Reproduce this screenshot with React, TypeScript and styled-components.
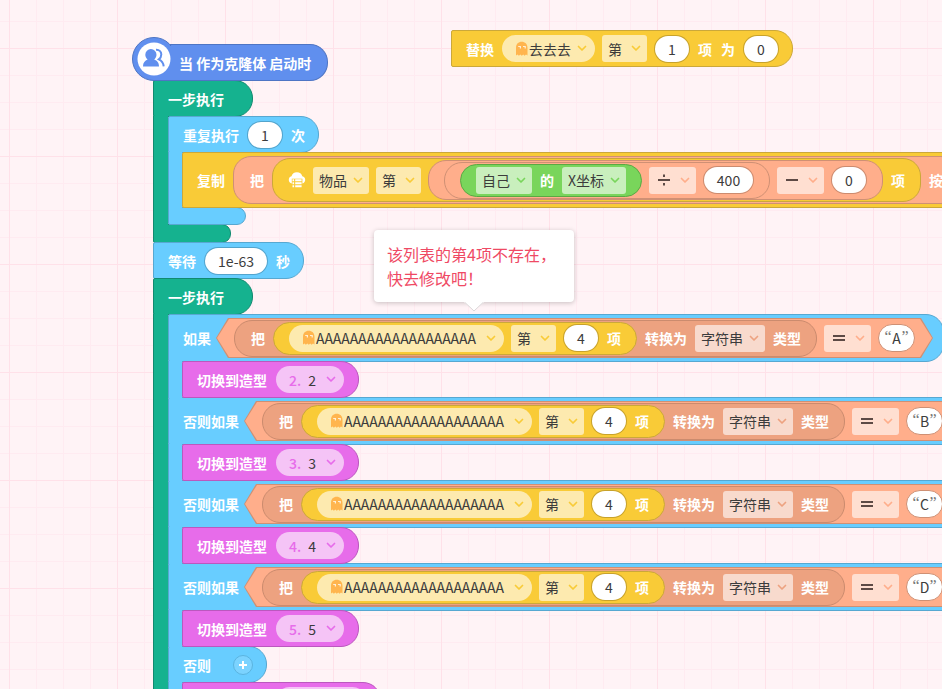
import React from "react";
import styled, { createGlobalStyle, css } from "styled-components";

const GlobalStyle = createGlobalStyle`
  *, *::before, *::after { box-sizing: border-box; }
  body {
    margin: 0;
    overflow: hidden;
    font-family: "Noto Sans CJK SC", sans-serif;
    font-size: 14px;
    line-height: 20px;
  }
`;

type Tone = { fill: string; edge: string; field: string };

const tones = {
  event: { fill: "#608fee", edge: "#4e75c4", field: "#bfd2f8" },
  parallel: { fill: "#15b28f", edge: "#118a70", field: "#a1e0d2" },
  control: { fill: "#68cdff", edge: "#57a8d1", field: "#c3ebff" },
  list: { fill: "#f9cb37", edge: "#cba83a", field: "#fdeaaf" },
  operator: { fill: "#ffae8b", edge: "#cf9074", field: "#ffdfd1" },
  convert: { fill: "#eda280", edge: "#cb8b6e", field: "#f8dacd" },
  sensing: { fill: "#79d55b", edge: "#5ba844", field: "#c9efbd" },
  looks: { fill: "#e76cea", edge: "#bb58be", field: "#f5c4f6" },
} satisfies Record<string, Tone>;

type ToneName = keyof typeof tones;

const Canvas = styled.main`
  position: relative;
  height: 100vh;
  overflow: hidden;
  background-color: #fff3f6;
  background-image:
    linear-gradient(to right, #ffe1e9 1px, transparent 1px),
    linear-gradient(to bottom, #ffe1e9 1px, transparent 1px),
    linear-gradient(to right, #ffebf1 1px, transparent 1px),
    linear-gradient(to bottom, #ffebf1 1px, transparent 1px);
  background-size: 108px 108px, 108px 108px, 27px 27px, 27px 27px;
  background-position: 9px 48px;
`;

const Script = styled.section<{ $x: number; $y: number }>`
  position: absolute;
  left: ${(p) => p.$x}px;
  top: ${(p) => p.$y}px;
  display: flex;
  flex-direction: column;
  align-items: flex-start;
  width: max-content;
  white-space: nowrap;
`;

const Block = styled.div<{ $tone: ToneName; $size?: number }>`
  display: flex;
  align-items: center;
  gap: 7px;
  height: ${(p) => p.$size ?? 37}px;
  margin-bottom: -1px;
  padding: 0 13px;
  border: 1px solid ${(p) => tones[p.$tone].edge};
  border-radius: 2px 18px 18px 2px;
  background: ${(p) => tones[p.$tone].fill};
`;

const ParallelHead = styled(Block)`
  padding-right: 28px;
`;

const ElseHead = styled(Block)`
  gap: 21px;
`;

const CostumeBlock = styled(Block)`
  gap: 8px;
  padding-right: 14px;
`;

const Hat = styled.div`
  position: relative;
  display: flex;
  align-items: flex-end;
  height: 44px;
  margin-left: -21px;
  margin-bottom: -1px;
`;

const HatBadge = styled.div`
  position: relative;
  display: grid;
  place-items: center;
  width: 44px;
  height: 44px;
  border: 1px solid ${tones.event.edge};
  border-radius: 50%;
  background: ${tones.event.fill};
  /* hides the seam between the badge and the bar */
  &::after {
    content: "";
    position: absolute;
    right: -2px;
    bottom: -1px;
    width: 24px;
    height: 35px;
    background: ${tones.event.fill};
    border-bottom: 1px solid ${tones.event.edge};
  }
  svg {
    position: relative;
    z-index: 1;
  }
`;

const HatBar = styled(Block)`
  margin: 0 0 0 -6px;
  padding: 0 16px 0 8px;
  border-left: 0;
  border-radius: 0 18px 18px 0;
`;

const Section = styled.div<{ $arm: number }>`
  display: grid;
  grid-template-columns: ${(p) => p.$arm}px max-content;
`;

const Arm = styled.div<{ $tone: ToneName }>`
  position: relative;
  z-index: 1;
  margin-bottom: -1px;
  border-left: 1px solid ${(p) => tones[p.$tone].edge};
  background: ${(p) => tones[p.$tone].fill};
`;

const Nest = styled.div`
  position: relative;
  z-index: 1;
  display: flex;
  flex-direction: column;
  align-items: flex-start;
`;

const Foot = styled.div<{ $tone: ToneName }>`
  width: 78px;
  height: 18px;
  border: 1px solid ${(p) => tones[p.$tone].edge};
  border-radius: 0 9px 9px 2px;
  background: ${(p) => tones[p.$tone].fill};
`;

const OuterFoot = styled(Foot)`
  height: 19px;
  margin-top: -1px;
  margin-bottom: -1px;
`;

const Word = styled.span`
  padding: 0 1px;
  color: #fff;
  font-weight: 700;
  &:last-child {
    padding-right: 0;
  }
`;

const Reporter = styled.div<{ $tone: ToneName; $size: number }>`
  display: flex;
  align-items: center;
  gap: 7px;
  height: ${(p) => p.$size}px;
  padding: 0 15px;
  border: 1px solid ${(p) => tones[p.$tone].edge};
  border-radius: 18px;
  background: ${(p) => tones[p.$tone].fill};
`;

const hexagon = css`
  clip-path: polygon(12px 0, calc(100% - 12px) 0, 100% 50%, calc(100% - 12px) 100%, 12px 100%, 0 50%);
`;

const Condition = styled.div`
  position: relative;
  isolation: isolate;
  display: flex;
  align-items: center;
  gap: 7px;
  height: 40px;
  margin-left: -3px;
  padding: 0 18px;
  &::before,
  &::after {
    content: "";
    position: absolute;
    z-index: -1;
    ${hexagon}
  }
  &::before {
    inset: 0;
    background: ${tones.operator.edge};
  }
  &::after {
    inset: 1px;
    background: ${tones.operator.fill};
  }
`;

const ConditionBlock = styled(Block)`
  padding-right: 10px;
`;

const FieldBox = styled.label<{ $tone: ToneName; $round?: boolean; $width?: number }>`
  display: flex;
  align-items: center;
  height: 27px;
  min-width: ${(p) => (p.$width ? `${p.$width}px` : "0")};
  padding: ${(p) => (p.$round ? "0 8px 0 13px" : "0 6px")};
  border-radius: ${(p) => (p.$round ? 14 : 3)}px;
  background: ${(p) => tones[p.$tone].field};
  color: ${(p) => tones[p.$tone].fill};
`;

const Select = styled.select`
  flex: 1;
  appearance: none;
  margin: 0;
  padding: 0;
  border: 0;
  outline: 0;
  background: transparent;
  color: #3c3c3c;
  font: inherit;
`;

const Index = styled.span`
  padding-right: 7px;
  font-weight: 500;
`;

const NumberInput = styled.input<{ $width?: number }>`
  width: ${(p) => p.$width ?? 36}px;
  height: 28px;
  padding: 0;
  border: 1px solid rgba(0, 0, 0, 0.2);
  border-radius: 14px;
  outline: 0;
  background: #fff;
  background-clip: padding-box;
  color: #3c3c3c;
  font: inherit;
  text-align: center;
`;

const TextBox = styled.label`
  display: flex;
  align-items: center;
  justify-content: center;
  width: 37px;
  height: 28px;
  border: 1px solid ${tones.operator.edge};
  border-radius: 14px;
  background: #fff;
`;

const Quote = styled.span`
  align-self: flex-start;
  color: #777;
  font-family: "Liberation Serif", serif;
  font-size: 16px;
  line-height: 24px;
`;

const TextInput = styled.input`
  width: 10px;
  padding: 0;
  border: 0;
  outline: 0;
  background: transparent;
  color: #3c3c3c;
  font: inherit;
  text-align: center;
`;

const AddButton = styled.button`
  display: grid;
  place-items: center;
  width: 20px;
  height: 20px;
  padding: 0;
  border: 1px solid #5bb4e0;
  border-radius: 50%;
  background: #7bd3ff;
  color: #fff;
`;

const Tooltip = styled.aside`
  position: absolute;
  left: 374px;
  top: 230px;
  width: 200px;
  padding: 12px 13px;
  border-radius: 4px;
  background: #fff;
  box-shadow: 0 1px 5px rgba(0, 0, 0, 0.22);
  color: #ef4964;
  font-size: 16px;
  line-height: 24px;
  white-space: nowrap;
  svg {
    position: absolute;
    left: 90px;
    top: 100%;
  }
`;

const Chevron = () => (
  <svg width="10" height="7" viewBox="0 0 10 7" fill="none" aria-hidden="true">
    <path d="M1.500 1.500L5 5l3.500-3.500" stroke="currentColor" strokeWidth="1.700" strokeLinecap="round" strokeLinejoin="round" />
  </svg>
);

const Ghost = () => (
  <svg width="14" height="16" viewBox="0 0 14 16" aria-hidden="true">
    <path d="M1 14.500V7C1 3 3.400.8 6.700.8S12.500 3 12.500 7v7.500l-1.500-.9-1.400 1.100-1.400-1.100-1.400 1.100-1.500-1.100-1.400 1.100-1.400-1.100z" fill="#ffb54e" />
    <path d="M3.200 5.500h2.200v2M8 5.500h2.200v2" fill="none" stroke="#fff0d6" strokeWidth="1.200" />
  </svg>
);

const CloudList = () => (
  <svg width="18" height="16" viewBox="0 0 18 16" aria-hidden="true">
    <path d="M3.800 11.500A3.700 3.700 0 0 1 3.500 4.300 5.600 5.600 0 0 1 14.300 4.300a3.700 3.700 0 0 1 .1 7.200z" fill="#fff" />
    <path d="M3.800 6.700h10.600V16H3.800z" fill="#f9cb37" />
    <path d="M4.500 8.200h1.600M7.200 8.200h6.400M4.500 11.200h1.600M7.200 11.200h6.400M4.500 14.200h1.600M7.200 14.200h6.400" stroke="#fff" strokeWidth="1.900" />
  </svg>
);

const CloneIcon = () => (
  <svg width="34" height="34" viewBox="0 0 34 34" aria-hidden="true">
    <circle cx="17" cy="17" r="16.500" fill="#fff" />
    <path d="M6 24.500c0-4 2-6 4.600-7-1.500-1.300-2.300-3-2.300-4.800a5.600 5.600 0 0 1 11.200 0c0 1.800-.8 3.500-2.300 4.800 2.800 1 4.800 3 4.800 7z" fill="#608fee" />
    <path d="M19 7.800c3.600-.2 5.300 2.200 5.300 4.700 0 2.200-.8 3.600-2.500 4.900 3 1.400 4.500 3.500 4.900 6.900" fill="none" stroke="#608fee" strokeWidth="2" />
  </svg>
);

const Operator = styled.svg`
  flex: none;
`;

const operatorMarks: Record<string, string> = {
  "÷": "M1 7h12M7 1.500v2.500M7 10v2.500",
  "−": "M1 7h12",
  "=": "M1 5h12M1 9h12",
};

type DropProps = {
  tone: ToneName;
  value: string;
  label: string;
  width?: number;
  round?: boolean;
  ghost?: boolean;
  index?: string;
};

function Drop({ tone, value, label, width, round, ghost, index }: DropProps) {
  return (
    <FieldBox $tone={tone} $round={round} $width={width}>
      {ghost && <Ghost />}
      {index && <Index>{index}</Index>}
      <Select aria-label={label} defaultValue={value}>
        <option>{value}</option>
      </Select>
      <Chevron />
    </FieldBox>
  );
}

const OperatorBox = styled.button`
  display: flex;
  align-items: center;
  justify-content: space-between;
  width: 47px;
  height: 27px;
  padding: 0 6px 0 8px;
  border: 0;
  border-radius: 3px;
  background: ${tones.operator.field};
  color: ${tones.operator.fill};
`;

function OperatorDrop({ sign }: { sign: string }) {
  return (
    <OperatorBox type="button" aria-label={`运算符 ${sign}`} aria-haspopup="listbox">
      <Operator width="14" height="14" viewBox="0 0 14 14" aria-hidden="true">
        <path d={operatorMarks[sign]} stroke="#5d4a45" strokeWidth="2" />
      </Operator>
      <Chevron />
    </OperatorBox>
  );
}

function Num({ value, width, label = "数值" }: { value: string; width?: number; label?: string }) {
  return <NumberInput $width={width} defaultValue={value} aria-label={label} />;
}

function Compare({ word, letter }: { word: string; letter: string }) {
  return (
    <ConditionBlock $tone="control" $size={48}>
      <Word>{word}</Word>
      <Condition>
        <Reporter $tone="convert" $size={37}>
          <Word>把</Word>
          <Reporter $tone="list" $size={33}>
            <Drop tone="list" value="AAAAAAAAAAAAAAAAAAA" label="列表" width={215} round ghost />
            <Drop tone="list" value="第" label="位置" width={45} />
            <Num value="4" />
            <Word>项</Word>
          </Reporter>
          <Word>转换为</Word>
          <Drop tone="convert" value="字符串" label="目标类型" width={70} />
          <Word>类型</Word>
        </Reporter>
        <OperatorDrop sign="=" />
        <TextBox>
          <Quote>“</Quote>
          <TextInput defaultValue={letter} aria-label="文本" />
          <Quote>”</Quote>
        </TextBox>
      </Condition>
    </ConditionBlock>
  );
}

function Costume({ value, width = 68 }: { value: string; width?: number }) {
  return (
    <CostumeBlock $tone="looks">
      <Word>切换到造型</Word>
      <Drop tone="looks" index={`${value}.`} value={value} label="造型" width={width} round />
    </CostumeBlock>
  );
}

const branches = [
  { word: "如果", letter: "A", costume: "2" },
  { word: "否则如果", letter: "B", costume: "3" },
  { word: "否则如果", letter: "C", costume: "4" },
  { word: "否则如果", letter: "D", costume: "5" },
];

function Nested({ tone, arm, children }: { tone: ToneName; arm: number; children: React.ReactNode }) {
  return (
    <Section $arm={arm}>
      <Arm $tone={tone} />
      <Nest>{children}</Nest>
    </Section>
  );
}

function CopyBlock() {
  return (
    <Block $tone="list" $size={56}>
      <Word>复制</Word>
      <Reporter $tone="operator" $size={48}>
        <Word>把</Word>
        <Reporter $tone="list" $size={44}>
          <CloudList />
          <Drop tone="list" value="物品" label="云列表" width={56} />
          <Drop tone="list" value="第" label="位置" width={45} />
          <Reporter $tone="operator" $size={40}>
            <Reporter $tone="operator" $size={37}>
              <Reporter $tone="sensing" $size={33}>
                <Drop tone="sensing" value="自己" label="对象" width={56} />
                <Word>的</Word>
                <Drop tone="sensing" value="X坐标" label="属性" width={64} />
              </Reporter>
              <OperatorDrop sign="÷" />
              <Num value="400" width={51} />
            </Reporter>
            <OperatorDrop sign="−" />
            <Num value="0" />
          </Reporter>
          <Word>项</Word>
        </Reporter>
        <Word>按</Word>
      </Reporter>
    </Block>
  );
}

export default function App() {
  return (
    <>
      <GlobalStyle />
      <Canvas>
        <Script $x={451} $y={30}>
          <Block $tone="list">
            <Word>替换</Word>
            <Drop tone="list" value="去去去" label="列表" width={93} round ghost />
            <Drop tone="list" value="第" label="位置" width={45} />
            <Num value="1" />
            <Word>项</Word>
            <Word>为</Word>
            <Num value="0" />
          </Block>
        </Script>

        <Script $x={153} $y={37}>
          <Hat>
            <HatBadge>
              <CloneIcon />
            </HatBadge>
            <HatBar $tone="event">
              <Word>当 作为克隆体 启动时</Word>
            </HatBar>
          </Hat>

          <ParallelHead $tone="parallel">
            <Word>一步执行</Word>
          </ParallelHead>
          <Nested tone="parallel" arm={15}>
            <Block $tone="control">
              <Word>重复执行</Word>
              <Num value="1" label="次数" />
              <Word>次</Word>
            </Block>
            <Nested tone="control" arm={14}>
              <CopyBlock />
            </Nested>
            <Foot $tone="control" />
          </Nested>
          <OuterFoot $tone="parallel" />

          <Block $tone="control">
            <Word>等待</Word>
            <Num value="1e-63" width={64} label="秒数" />
            <Word>秒</Word>
          </Block>

          <ParallelHead $tone="parallel">
            <Word>一步执行</Word>
          </ParallelHead>
          <Nested tone="parallel" arm={15}>
            {branches.map((branch) => (
              <React.Fragment key={branch.letter}>
                <Compare word={branch.word} letter={branch.letter} />
                <Nested tone="control" arm={14}>
                  <Costume value={branch.costume} />
                </Nested>
              </React.Fragment>
            ))}
            <ElseHead $tone="control">
              <Word>否则</Word>
              <AddButton type="button" aria-label="添加分支">
                <svg width="10" height="10" viewBox="0 0 10 10" aria-hidden="true">
                  <path d="M5 1v8M1 5h8" stroke="currentColor" strokeWidth="2" />
                </svg>
              </AddButton>
            </ElseHead>
            <Nested tone="control" arm={14}>
              <Costume value="6" width={90} />
            </Nested>
          </Nested>
        </Script>

        <Tooltip role="status">
          该列表的第4项不存在，
          <br />
          快去修改吧！
          <svg width="20" height="10" viewBox="0 0 20 10" aria-hidden="true">
            <path d="M0 0h20l-10 9z" fill="#fff" />
            <path d="M1 .5l9 8.500 9-8.500" fill="none" stroke="#dcd6d8" />
          </svg>
        </Tooltip>
      </Canvas>
    </>
  );
}
